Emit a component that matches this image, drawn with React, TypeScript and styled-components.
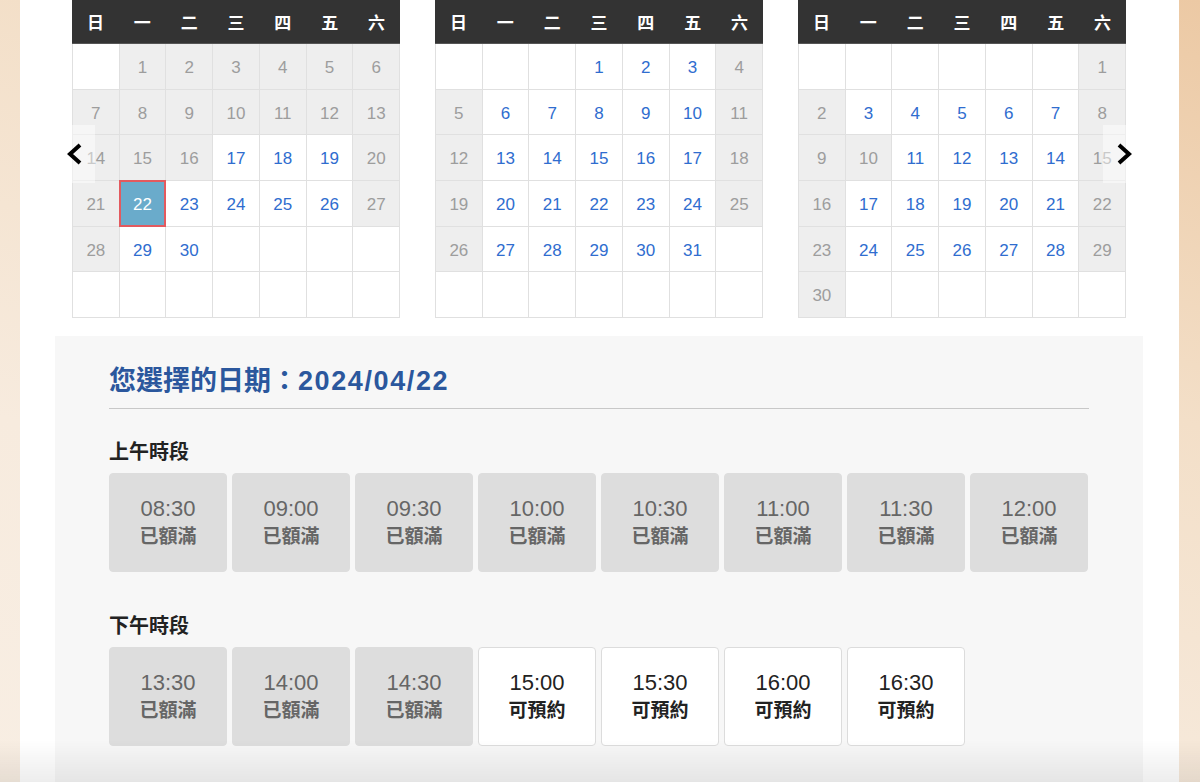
import styled, { createGlobalStyle } from 'styled-components';

const FONT = '"Liberation Sans", "Noto Sans CJK TC", sans-serif';

const GlobalStyle = createGlobalStyle`
  html, body {
    margin: 0;
    padding: 0;
  }
  body {
    font-family: ${FONT};
    background: linear-gradient(200deg, #ecc9a4 0%, #f3dfc8 35%, #f7ebde 70%, #f8eee3 100%);
    min-height: 782px;
    overflow: hidden;
  }
`;

type DayKind = 'empty' | 'off' | 'open' | 'picked';

interface IMonth {
  lead: number;
  days: number;
  open: number[];
  picked?: number;
}

const WEEK = ['日', '一', '二', '三', '四', '五', '六'];

const MONTHS: IMonth[] = [
  {
    lead: 1,
    days: 30,
    open: [17, 18, 19, 23, 24, 25, 26, 29, 30],
    picked: 22,
  },
  {
    lead: 3,
    days: 31,
    open: [1, 2, 3, 6, 7, 8, 9, 10, 13, 14, 15, 16, 17, 20, 21, 22, 23, 24, 27, 28, 29, 30, 31],
  },
  {
    lead: 6,
    days: 30,
    open: [3, 4, 5, 6, 7, 11, 12, 13, 14, 17, 18, 19, 20, 21, 24, 25, 26, 27, 28],
  },
];

const MORNING = ['08:30', '09:00', '09:30', '10:00', '10:30', '11:00', '11:30', '12:00'];
const AFTERNOON: [string, boolean][] = [
  ['13:30', false],
  ['14:00', false],
  ['14:30', false],
  ['15:00', true],
  ['15:30', true],
  ['16:00', true],
  ['16:30', true],
];

const Page = styled.div`
  margin: 0 21px 0 20px;
  min-height: 782px;
  background: #fff;
`;

const CalendarRow = styled.div`
  position: relative;
  display: flex;
  gap: 35px;
  padding-left: 52px;
`;

const Calendar = styled.div`
  width: 328px;
`;

const WeekBar = styled.div`
  display: grid;
  grid-template-columns: repeat(7, 1fr);
  height: 44px;
  background: #333;
  color: #fff;
  font-size: 17px;
  font-weight: 700;
  align-items: center;
  text-align: center;
  border-bottom: 1px solid #555;
  box-sizing: border-box;
`;

const DayGrid = styled.div`
  display: grid;
  grid-template-columns: repeat(7, 1fr);
  grid-auto-rows: 45.7px;
  border-left: 1px solid #e0e0e0;
`;

const Day = styled.div<{ $kind: DayKind }>`
  display: flex;
  align-items: center;
  justify-content: center;
  box-sizing: border-box;
  padding-top: 3px;
  font-size: 17px;
  border-right: 1px solid #e0e0e0;
  border-bottom: 1px solid #e0e0e0;
  background: ${(p) =>
    p.$kind === 'off' ? '#eeeeee' : p.$kind === 'picked' ? '#6aabcb' : '#fff'};
  color: ${(p) => (p.$kind === 'off' ? '#9d9d9d' : p.$kind === 'picked' ? '#fff' : '#2f6dcf')};
  ${(p) => p.$kind === 'picked' && 'border: 2px solid #e35a5f; margin: -1px 0 0 -1px;'}
`;

const Arrow = styled.button<{ $side: 'left' | 'right' }>`
  position: absolute;
  top: 125px;
  ${(p) => (p.$side === 'left' ? 'left: 52px;' : 'right: 53px;')}
  width: 23px;
  height: 58px;
  padding: 0;
  border: none;
  background: rgba(255, 255, 255, 0.45);
  cursor: pointer;

  svg {
    position: absolute;
    top: 17px;
    ${(p) => (p.$side === 'left' ? 'left: -7px;' : 'left: 11px;')}
  }
`;

const Panel = styled.div`
  margin: 18px 0 0 35px;
  width: 1088px;
  min-height: 446px;
  background: #f7f7f7;
  padding: 26px 54px 0;
  box-sizing: border-box;
`;

const Title = styled.h2`
  margin: 0;
  padding-bottom: 8px;
  border-bottom: 1px solid #c8c8c8;
  font-size: 27px;
  line-height: 38px;
  font-weight: 700;
  color: #2b579d;
`;

const TitleDate = styled.span`
  font-size: 27px;
  letter-spacing: 1.6px;
`;

const Section = styled.h3<{ $gap: number }>`
  margin: ${(p) => p.$gap}px 0 7px;
  font-size: 20px;
  line-height: 28px;
  font-weight: 700;
  color: #222;
`;

const SlotList = styled.div`
  display: grid;
  grid-template-columns: repeat(8, 118px);
  gap: 5px;
`;

const Slot = styled.div<{ $open: boolean }>`
  height: 99px;
  box-sizing: border-box;
  border-radius: 4px;
  border: 1px solid ${(p) => (p.$open ? '#dcdcdc' : '#dddddd')};
  background: ${(p) => (p.$open ? '#fff' : '#dddddd')};
  color: ${(p) => (p.$open ? '#222' : '#666')};
  display: flex;
  flex-direction: column;
  align-items: center;
  justify-content: center;
`;

const SlotTime = styled.span`
  font-size: 22px;
  line-height: 28px;
`;

const SlotState = styled.span`
  font-size: 19px;
  line-height: 28px;
  font-weight: 700;
`;

const BottomShade = styled.div`
  position: fixed;
  left: 0;
  right: 0;
  bottom: 0;
  height: 42px;
  background: linear-gradient(rgba(0, 0, 0, 0), rgba(0, 0, 0, 0.07));
  pointer-events: none;
`;

function Chevron({ dir }: { dir: 'left' | 'right' }) {
  const points = dir === 'left' ? '15,3 5,12 15,21' : '5,3 15,12 5,21';
  return (
    <svg width="20" height="24" viewBox="0 0 20 24">
      <polyline points={points} fill="none" stroke="#000" strokeWidth="4" strokeLinejoin="miter" />
    </svg>
  );
}

function Month({ month }: { month: IMonth }) {
  const cells: { label: string; kind: DayKind }[] = [];
  for (let i = 0; i < month.lead; i++) cells.push({ label: '', kind: 'empty' });
  for (let d = 1; d <= month.days; d++) {
    let kind: DayKind = 'off';
    if (d === month.picked) kind = 'picked';
    else if (month.open.includes(d)) kind = 'open';
    cells.push({ label: String(d), kind });
  }
  while (cells.length < 42) cells.push({ label: '', kind: 'empty' });

  return (
    <Calendar>
      <WeekBar>
        {WEEK.map((w) => (
          <span key={w}>{w}</span>
        ))}
      </WeekBar>
      <DayGrid>
        {cells.map((c, i) => (
          <Day key={i} $kind={c.kind}>
            {c.label}
          </Day>
        ))}
      </DayGrid>
    </Calendar>
  );
}

export default function App() {
  return (
    <>
      <GlobalStyle />
      <Page>
        <CalendarRow>
          {MONTHS.map((m, i) => (
            <Month key={i} month={m} />
          ))}
          <Arrow $side="left" aria-label="上個月">
            <Chevron dir="left" />
          </Arrow>
          <Arrow $side="right" aria-label="下個月">
            <Chevron dir="right" />
          </Arrow>
        </CalendarRow>

        <Panel>
          <Title>
            您選擇的日期：<TitleDate>2024/04/22</TitleDate>
          </Title>

          <Section $gap={29}>上午時段</Section>
          <SlotList>
            {MORNING.map((t) => (
              <Slot key={t} $open={false}>
                <SlotTime>{t}</SlotTime>
                <SlotState>已額滿</SlotState>
              </Slot>
            ))}
          </SlotList>

          <Section $gap={40}>下午時段</Section>
          <SlotList>
            {AFTERNOON.map(([t, open]) => (
              <Slot key={t} $open={open}>
                <SlotTime>{t}</SlotTime>
                <SlotState>{open ? '可預約' : '已額滿'}</SlotState>
              </Slot>
            ))}
          </SlotList>
        </Panel>
      </Page>
      <BottomShade />
    </>
  );
}
